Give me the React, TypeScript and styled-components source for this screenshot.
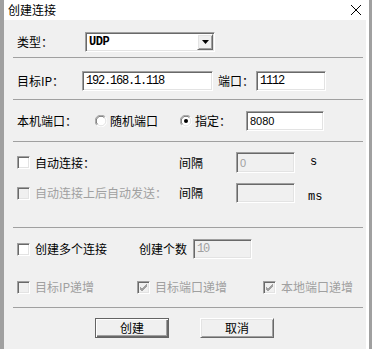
import React from 'react';
import styled, { createGlobalStyle, css } from 'styled-components';

const GlobalStyle = createGlobalStyle`
  html, body { margin: 0; padding: 0; background: #f0f0f0; }
  body {
    font-family: "Noto Sans CJK SC", "Liberation Sans", sans-serif;
    font-size: 12px;
    color: #000;
  }
`;

const Window = styled.div`
  width: 372px;
  height: 349px;
  box-sizing: border-box;
  border-left: 4px solid #a0a0a0;
  border-right: 3px solid #a0a0a0;
  display: flex;
  flex-direction: column;
  overflow: hidden;
`;

const TitleBar = styled.div`
  height: 20px;
  flex-shrink: 0;
  background: #fff;
  display: flex;
  align-items: center;
  justify-content: space-between;
  padding: 0 7px 0 4px;
  font-size: 12px;
  line-height: 14px;
`;

const Body = styled.div`
  flex: 1;
  background: #f0f0f0;
  border-right: 3px solid #fff;
  padding: 0 3px 0 9px;
  display: flex;
  flex-direction: column;
`;

const Section = styled.div<{ $h: number; $pt: number; $gap?: number; $last?: boolean }>`
  box-sizing: border-box;
  height: ${(p) => p.$h}px;
  padding: ${(p) => p.$pt}px 0 0 4px;
  display: flex;
  flex-direction: column;
  gap: ${(p) => p.$gap || 0}px;
  border-bottom: ${(p) => (p.$last ? 'none' : '1px solid #a0a0a0')};
  flex-shrink: 0;
`;

const Row = styled.div<{ $h?: number }>`
  display: flex;
  align-items: center;
  height: ${(p) => p.$h || 20}px;
`;

const Cell = styled.div<{ $w?: number; $dim?: boolean; $mono?: boolean; $drop?: number }>`
  ${(p) => (p.$w ? `width: ${p.$w}px;` : '')}
  flex-shrink: 0;
  white-space: nowrap;
  line-height: 14px;
  color: ${(p) => (p.$dim ? '#a0a0a0' : '#000')};
  ${(p) =>
    p.$mono &&
    css`
      font-family: "Liberation Mono", monospace;
      font-size: 12px;
    `}
  ${(p) => (p.$drop ? `position: relative; top: ${p.$drop}px;` : '')}
`;

const sunken = css`
  box-sizing: border-box;
  border: 1px solid;
  border-color: #a0a0a0 #fff #fff #a0a0a0;
  box-shadow: inset 1px 1px 0 #696969, inset -1px -1px 0 #e3e3e3;
`;

const Field = styled.div<{ $w: number; $h?: number; $off?: boolean; $font?: 'mono' | 'sans' }>`
  ${sunken}
  width: ${(p) => p.$w}px;
  height: ${(p) => p.$h || 20}px;
  flex-shrink: 0;
  background: ${(p) => (p.$off ? '#f0f0f0' : '#fff')};
  color: ${(p) => (p.$off ? '#a0a0a0' : '#000')};
  display: flex;
  align-items: center;
  padding-left: 3px;
  ${(p) =>
    p.$font === 'sans'
      ? css`
          font-family: "Liberation Sans", sans-serif;
          font-size: 11px;
        `
      : css`
          font-family: "Liberation Mono", monospace;
          font-size: 12px;
          letter-spacing: -1.2px;
        `}
`;

const Select = styled.div`
  ${sunken}
  width: 130px;
  height: 20px;
  background: #fff;
  display: flex;
  align-items: center;
  justify-content: space-between;
  padding: 0 1px 0 3px;
  font-family: "Liberation Mono", monospace;
  font-weight: bold;
  font-size: 12px;
  letter-spacing: -0.4px;
`;

const raised = css`
  box-sizing: border-box;
  border: 1px solid;
  border-color: #fff #696969 #696969 #fff;
  box-shadow: inset 1px 1px 0 #e3e3e3, inset -1px -1px 0 #a0a0a0;
  background: #f0f0f0;
`;

const DropButton = styled.div`
  ${raised}
  width: 16px;
  height: 16px;
  display: flex;
  align-items: center;
  justify-content: center;
`;

const Box = styled.span<{ $off?: boolean }>`
  ${sunken}
  width: 13px;
  height: 13px;
  flex-shrink: 0;
  background: ${(p) => (p.$off ? '#f0f0f0' : '#fff')};
  display: inline-flex;
  align-items: center;
  justify-content: center;
`;

const Check = styled.div<{ $w: number; $off?: boolean }>`
  width: ${(p) => p.$w}px;
  flex-shrink: 0;
  display: flex;
  align-items: center;
  gap: 5px;
  white-space: nowrap;
  line-height: 14px;
  color: ${(p) => (p.$off ? '#a0a0a0' : '#000')};
`;

const Radio = styled.div<{ $w: number }>`
  width: ${(p) => p.$w}px;
  flex-shrink: 0;
  display: flex;
  align-items: center;
  gap: 3px;
  white-space: nowrap;
  line-height: 14px;
`;

const ButtonBar = styled.div`
  display: flex;
  padding-left: 78px;
  gap: 31px;
`;

const Button = styled.div<{ $default?: boolean }>`
  width: 74px;
  height: 20px;
  display: flex;
  align-items: center;
  justify-content: center;
  font-size: 12px;
  line-height: 14px;
  ${raised}
  ${(p) =>
    p.$default &&
    css`
      border-color: #646464;
      box-shadow: inset 1px 1px 0 #fff, inset -1px -1px 0 #696969, inset -2px -2px 0 #a0a0a0;
    `}
`;

const CheckBox = ({ checked, off }: { checked?: boolean; off?: boolean }) => (
  <Box $off={off}>
    {checked && (
      <svg width="9" height="9" viewBox="0 0 9 9">
        <path d="M1 4 L3 6 L8 1 M1 5 L3 7 L8 2 M1 6 L3 8 L8 3" stroke={off ? '#a0a0a0' : '#000'} strokeWidth="1" fill="none" />
      </svg>
    )}
  </Box>
);

const RadioDot = ({ on }: { on?: boolean }) => (
  <svg width="12" height="12" viewBox="0 0 12 12">
    <circle cx="6" cy="6" r="5.5" fill="#fff" />
    <path d="M1.8 10.2 A5.5 5.5 0 0 1 10.2 1.8" stroke="#a0a0a0" strokeWidth="1" fill="none" />
    <path d="M2.6 9.4 A4.5 4.5 0 0 1 9.4 2.6" stroke="#696969" strokeWidth="1" fill="none" />
    <path d="M10.2 1.8 A5.5 5.5 0 0 1 1.8 10.2" stroke="#fff" strokeWidth="1" fill="none" />
    <path d="M9.4 2.6 A4.5 4.5 0 0 1 2.6 9.4" stroke="#e3e3e3" strokeWidth="1" fill="none" />
    {on && <circle cx="6" cy="6" r="2" fill="#000" />}
  </svg>
);

export default function App() {
  return (
    <>
      <GlobalStyle />
      <Window>
        <TitleBar>
          <span>创建连接</span>
          <svg width="12" height="12" viewBox="0 0 12 12">
            <path d="M1 1 L11 11 M11 1 L1 11" stroke="#000" strokeWidth="1" />
          </svg>
        </TitleBar>
        <Body>
          <Section $h={38} $pt={12}>
            <Row>
              <Cell $w={68}>类型：</Cell>
              <Select>
                <span>UDP</span>
                <DropButton>
                  <svg width="7" height="4" viewBox="0 0 7 4">
                    <path d="M0 0 H7 L3.5 4 Z" fill="#000" />
                  </svg>
                </DropButton>
              </Select>
            </Row>
          </Section>

          <Section $h={42} $pt={13}>
            <Row>
              <Cell $w={65}>目标IP：</Cell>
              <Field $w={131}>192.168.1.118</Field>
              <Cell $w={5} />
              <Cell $w={38}>端口：</Cell>
              <Field $w={70}>1112</Field>
            </Row>
          </Section>

          <Section $h={42} $pt={11}>
            <Row>
              <Cell $w={78}>本机端口：</Cell>
              <Radio $w={85}>
                <RadioDot />
                <span>随机端口</span>
              </Radio>
              <Radio $w={66}>
                <RadioDot on />
                <span>指定：</span>
              </Radio>
              <Field $w={78} $font="sans">8080</Field>
            </Row>
          </Section>

          <Section $h={86} $pt={10} $gap={10}>
            <Row $h={21}>
              <Check $w={162}>
                <CheckBox />
                <span>自动连接：</span>
              </Check>
              <Cell $w={57}>间隔</Cell>
              <Field $w={59} $h={21} $off $font="sans">0</Field>
              <Cell $w={15} />
              <Cell $mono $drop={-1}>s</Cell>
            </Row>
            <Row $h={20}>
              <Check $w={162} $off>
                <CheckBox off />
                <span>自动连接上后自动发送：</span>
              </Check>
              <Cell $w={57}>间隔</Cell>
              <Field $w={59} $off />
              <Cell $w={13} />
              <Cell $mono $drop={4}>ms</Cell>
            </Row>
          </Section>

          <Section $h={80} $pt={11} $gap={18}>
            <Row>
              <Check $w={122}>
                <CheckBox />
                <span>创建多个连接</span>
              </Check>
              <Cell $w={54}>创建个数</Cell>
              <Field $w={59} $off>10</Field>
            </Row>
            <Row>
              <Check $w={120} $off>
                <CheckBox off />
                <span>目标IP递增</span>
              </Check>
              <Check $w={126} $off>
                <CheckBox off checked />
                <span>目标端口递增</span>
              </Check>
              <Check $w={100} $off>
                <CheckBox off checked />
                <span>本地端口递增</span>
              </Check>
            </Row>
          </Section>

          <Section $h={41} $pt={10} $last>
            <ButtonBar>
              <Button $default>创建</Button>
              <Button>取消</Button>
            </ButtonBar>
          </Section>
        </Body>
      </Window>
    </>
  );
}
